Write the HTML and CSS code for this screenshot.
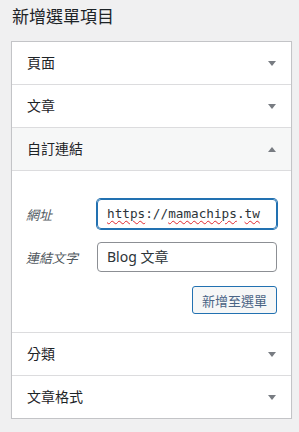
FILE: index.html
```html
<!DOCTYPE html>
<html>
<head>
  <title>新增選單項目</title>
  <link rel="stylesheet" href="styles.css">
</head>
<body>
  <h2 class="title">新增選單項目</h2>
  <div class="panel">
    <div class="section">
      <div class="section-title">頁面<span class="arrow down"></span></div>
    </div>
    <div class="section">
      <div class="section-title">文章<span class="arrow down"></span></div>
    </div>
    <div class="section open">
      <div class="section-title">自訂連結<span class="arrow up"></span></div>
      <div class="section-body">
        <div class="field-row">
          <label class="field-label">網址</label>
          <div class="field focus mono"><span class="typo">https</span>://<span class="typo">mamachips</span>.<span class="typo">tw</span></div>
        </div>
        <div class="field-row">
          <label class="field-label">連結文字</label>
          <div class="field">Blog 文章</div>
        </div>
        <div class="actions">
          <button class="button">新增至選單</button>
        </div>
      </div>
    </div>
    <div class="section">
      <div class="section-title">分類<span class="arrow down"></span></div>
    </div>
    <div class="section">
      <div class="section-title">文章格式<span class="arrow down"></span></div>
    </div>
  </div>
</body>
</html>
```

FILE: styles.css
```css
body { margin: 0; background: #f0f0f1; font-family: "Noto Sans", "Noto Sans CJK TC", sans-serif; color: #1d2327; }
.title { margin: 0; padding: 5px 0 0 12px; height: 36px; font-size: 17px; line-height: 24px; font-weight: 400; color: #1d2327; }
.panel { margin: 0 0 0 11px; width: 281px; box-sizing: border-box; background: #fff; border: 1px solid #c3c4c7; box-shadow: 0 1px 1px rgba(0,0,0,0.06); }
.section { border-bottom: 1px solid #dcdcde; }
.section:last-child { border-bottom: none; }
.section-title { display: flex; align-items: center; justify-content: space-between; height: 42px; padding: 0 15px; font-size: 14px; line-height: 20px; }
.open .section-title { background: #f6f7f7; border-bottom: 1px solid #dcdcde; }
.arrow { width: 0; height: 0; border-left: 4px solid transparent; border-right: 4px solid transparent; }
.arrow.down { border-top: 5px solid #787c82; }
.arrow.up { border-bottom: 5px solid #787c82; }
.section-body { padding: 28px 14px 18px 14px; }
.field-row { display: flex; align-items: center; margin-bottom: 13px; }
.field-label { width: 71px; font-size: 13px; font-style: italic; color: #50575e; }
.field { box-sizing: border-box; width: 180px; height: 30px; padding: 0 9px; border: 1px solid #8c8f94; border-radius: 4px; font-size: 14px; line-height: 28px; color: #2c3338; white-space: nowrap; overflow: hidden; }
.field.focus { border-color: #2271b1; box-shadow: 0 0 0 1px #2271b1; }
.mono { font-family: "DejaVu Sans Mono", monospace; font-size: 12.7px; }
.typo { text-decoration: underline wavy #e0282e; text-decoration-thickness: 1px; text-underline-offset: 2px; }
.actions { display: flex; justify-content: flex-end; margin-top: 14px; }
.button { box-sizing: border-box; height: 28px; padding: 0 9px; background: #f6f7f7; border: 1px solid #2271b1; border-radius: 3px; font-family: "Noto Sans CJK TC", sans-serif; font-size: 13px; color: #4a6485; cursor: pointer; }
```
